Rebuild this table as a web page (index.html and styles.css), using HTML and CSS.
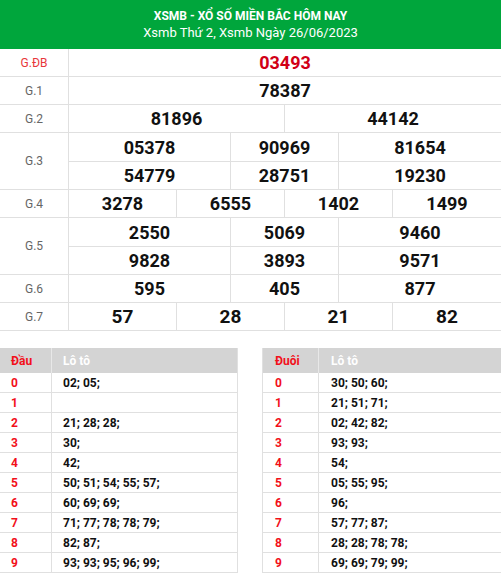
FILE: index.html
```html
<!DOCTYPE html>
<html lang="vi">
<head>
<meta charset="utf-8">
<title>XSMB</title>
<link rel="stylesheet" href="styles.css">
</head>
<body>
<div class="head">
  <div class="title">XSMB - XỔ SỐ MIỀN BẮC HÔM NAY</div>
  <div class="sub">Xsmb Thứ 2, Xsmb Ngày 26/06/2023</div>
</div>

<div class="res">
  <div class="row">
    <div class="lbl red">G.ĐB</div>
    <div class="nums c1"><div class="n db">03493</div></div>
  </div>
  <div class="row">
    <div class="lbl">G.1</div>
    <div class="nums c1"><div class="n">78387</div></div>
  </div>
  <div class="row">
    <div class="lbl">G.2</div>
    <div class="nums c2"><div class="n">81896</div><div class="n">44142</div></div>
  </div>
  <div class="row">
    <div class="lbl">G.3</div>
    <div class="nums c3 two"><div class="n">05378</div><div class="n">90969</div><div class="n">81654</div><div class="n">54779</div><div class="n">28751</div><div class="n">19230</div></div>
  </div>
  <div class="row">
    <div class="lbl">G.4</div>
    <div class="nums c4"><div class="n">3278</div><div class="n">6555</div><div class="n">1402</div><div class="n">1499</div></div>
  </div>
  <div class="row">
    <div class="lbl">G.5</div>
    <div class="nums c3 two"><div class="n">2550</div><div class="n">5069</div><div class="n">9460</div><div class="n">9828</div><div class="n">3893</div><div class="n">9571</div></div>
  </div>
  <div class="row">
    <div class="lbl">G.6</div>
    <div class="nums c3"><div class="n">595</div><div class="n">405</div><div class="n">877</div></div>
  </div>
  <div class="row">
    <div class="lbl">G.7</div>
    <div class="nums c4"><div class="n big">57</div><div class="n big">28</div><div class="n big">21</div><div class="n big">82</div></div>
  </div>
</div>

<div class="loto">
  <div class="lt left">
    <div class="lr lh"><div class="k">Đầu</div><div class="v">Lô tô</div></div>
    <div class="lr"><div class="k">0</div><div class="v">02; 05;</div></div>
    <div class="lr"><div class="k">1</div><div class="v"></div></div>
    <div class="lr"><div class="k">2</div><div class="v">21; 28; 28;</div></div>
    <div class="lr"><div class="k">3</div><div class="v">30;</div></div>
    <div class="lr"><div class="k">4</div><div class="v">42;</div></div>
    <div class="lr"><div class="k">5</div><div class="v">50; 51; 54; 55; 57;</div></div>
    <div class="lr"><div class="k">6</div><div class="v">60; 69; 69;</div></div>
    <div class="lr"><div class="k">7</div><div class="v">71; 77; 78; 78; 79;</div></div>
    <div class="lr"><div class="k">8</div><div class="v">82; 87;</div></div>
    <div class="lr"><div class="k">9</div><div class="v">93; 93; 95; 96; 99;</div></div>
  </div>
  <div class="lt right">
    <div class="lr lh"><div class="k">Đuôi</div><div class="v">Lô tô</div></div>
    <div class="lr"><div class="k">0</div><div class="v">30; 50; 60;</div></div>
    <div class="lr"><div class="k">1</div><div class="v">21; 51; 71;</div></div>
    <div class="lr"><div class="k">2</div><div class="v">02; 42; 82;</div></div>
    <div class="lr"><div class="k">3</div><div class="v">93; 93;</div></div>
    <div class="lr"><div class="k">4</div><div class="v">54;</div></div>
    <div class="lr"><div class="k">5</div><div class="v">05; 55; 95;</div></div>
    <div class="lr"><div class="k">6</div><div class="v">96;</div></div>
    <div class="lr"><div class="k">7</div><div class="v">57; 77; 87;</div></div>
    <div class="lr"><div class="k">8</div><div class="v">28; 28; 78; 78;</div></div>
    <div class="lr"><div class="k">9</div><div class="v">69; 69; 79; 99;</div></div>
  </div>
</div>
</body>
</html>
```

FILE: styles.css
```css
html, body {
  margin: 0;
  padding: 0;
  background: #fff;
}
body {
  font-family: Roboto, "Noto Sans", sans-serif;
  color: #111;
  width: 501px;
}
.head {
  background: #00a63c;
  color: #fff;
  height: 49px;
  text-align: center;
  display: flex;
  flex-direction: column;
  justify-content: center;
}
.title {
  font-size: 12px;
  font-weight: 700;
  line-height: 16px;
}
.sub {
  font-size: 13px;
  line-height: 16px;
  margin-top: 1px;
}
.row {
  display: grid;
  grid-template-columns: 69px 1fr;
  border-bottom: 1px solid #e0e0e0;
}
.lbl {
  border-right: 1px solid #e0e0e0;
  display: flex;
  align-items: center;
  justify-content: center;
  font-size: 12px;
  color: #666;
}
.lbl.red {
  color: #e8373a;
}
.nums {
  display: grid;
}
.n {
  height: 27px;
  display: flex;
  align-items: center;
  justify-content: center;
  font-size: 18px;
  font-weight: 700;
  color: #111;
  border-right: 1px solid #e0e0e0;
}
.n.db {
  color: #d10016;
}
.n.big {
  font-size: 19px;
}
.c1 { grid-template-columns: 1fr; }
.c2 { grid-template-columns: 216px 1fr; }
.c3 { grid-template-columns: 162px 108px 1fr; }
.c4 { grid-template-columns: 108px 108px 108px 1fr; }
.c1 .n:last-child,
.c2 .n:nth-child(2),
.c3 .n:nth-child(3n),
.c4 .n:nth-child(4) {
  border-right: 0;
}
.two .n:nth-child(-n+3) {
  height: 28px;
  border-bottom: 1px solid #e0e0e0;
}
.loto {
  display: flex;
  justify-content: space-between;
  margin-top: 17px;
}
.lt {
  display: flex;
  flex-direction: column;
}
.lt.left {
  width: 237px;
  border-right: 1px solid #e0e0e0;
}
.lt.right {
  width: 238px;
  border-left: 1px solid #e0e0e0;
}
.lr {
  display: grid;
  height: 19px;
  border-bottom: 1px solid #e0e0e0;
  font-size: 12px;
  font-weight: 700;
}
.left .lr { grid-template-columns: 52px 1fr; }
.right .lr { grid-template-columns: 56px 1fr; }
.lr .k {
  color: #f2101a;
  padding-left: 11px;
  display: flex;
  align-items: center;
  border-right: 1px solid #e0e0e0;
}
.right .lr .k { padding-left: 12px; }
.lr .v {
  color: #111;
  padding-left: 11px;
  display: flex;
  align-items: center;
}
.right .lr .v { padding-left: 12px; }
.lr.lh {
  height: 25px;
  background: #d4d4d4;
  border-bottom: 0;
}
.lr.lh .k {
  border-right: 1px solid #e8e8e8;
}
.lr.lh .v {
  color: #fff;
}
```
